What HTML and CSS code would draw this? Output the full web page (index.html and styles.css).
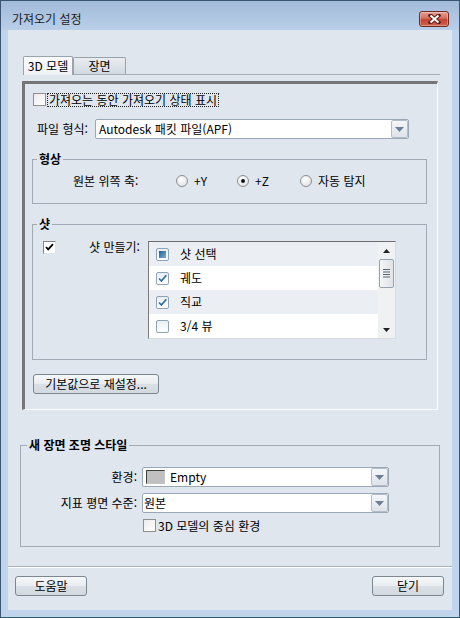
FILE: index.html
```html
<!DOCTYPE html>
<html lang="ko">
<head>
<meta charset="utf-8">
<title>가져오기 설정</title>
<link rel="stylesheet" href="styles.css">
</head>
<body>
<div class="window">
  <div class="titlebar">
    <span class="title">가져오기 설정</span>
    <span class="close">
      <svg width="13" height="10" viewBox="0 0 13 10"><path d="M2.5 1.5 L10.5 8.5 M10.5 1.5 L2.5 8.5" stroke="#5b2019" stroke-width="4" stroke-linecap="square"/><path d="M2.5 1.5 L10.5 8.5 M10.5 1.5 L2.5 8.5" stroke="#fff" stroke-width="2"/></svg>
    </span>
  </div>
  <div class="client">
    <div class="tabs">
      <div class="tab active">3D 모델</div>
      <div class="tab">장면</div>
    </div>
    <div class="panel">
      <div class="row-check">
        <span class="cb"></span>
        <span class="focus">가져오는 동안 가져오기 상태 표시</span>
      </div>
      <div class="row-file">
        <span class="lbl-file">파일 형식:</span>
        <div class="select file-select">
          <span class="val">Autodesk 패킷 파일(APF)</span>
          <span class="dd"><svg width="9" height="5" viewBox="0 0 9 5"><path d="M0 0 H9 L4.5 5 Z" fill="#6c7f97"/></svg></span>
        </div>
      </div>
      <fieldset class="group">
        <legend>형상</legend>
        <div class="radio-row">
          <span class="lbl-axis">원본 위쪽 축:</span>
          <span class="radio-item w61"><span class="radio"></span>+Y</span>
          <span class="radio-item w63"><span class="radio on"></span>+Z</span>
          <span class="radio-item"><span class="radio"></span>자동 탐지</span>
        </div>
      </fieldset>
      <fieldset class="group">
        <legend>샷</legend>
        <div class="shot-row">
          <span class="cb-classic"><svg width="11" height="11" viewBox="0 0 11 11"><path d="M2 5 L4.2 7.4 L9 2.2" fill="none" stroke="#000" stroke-width="1.8"/></svg></span>
          <span class="lbl-shot">샷 만들기:</span>
          <div class="list">
            <div class="list-rows">
              <div class="list-row alt"><span class="lcb mixed"><span class="fill"></span></span>샷 선택</div>
              <div class="list-row"><span class="lcb"><svg width="11" height="11" viewBox="0 0 11 11"><path d="M2 5.5 L4.4 8 L9.3 2.2" fill="none" stroke="#2f6c9e" stroke-width="1.7"/></svg></span>궤도</div>
              <div class="list-row alt"><span class="lcb"><svg width="11" height="11" viewBox="0 0 11 11"><path d="M2 5.5 L4.4 8 L9.3 2.2" fill="none" stroke="#2f6c9e" stroke-width="1.7"/></svg></span>직교</div>
              <div class="list-row"><span class="lcb"></span>3/4 뷰</div>
            </div>
            <div class="sb">
              <span class="sb-btn"><svg width="7" height="4" viewBox="0 0 7 4"><path d="M0 4 H7 L3.5 0 Z" fill="#222"/></svg></span>
              <span class="thumb"><svg width="7" height="9" viewBox="0 0 7 9"><path d="M0 0.5 H7 M0 3 H7 M0 5.5 H7 M0 8 H7" stroke="#5a6570" stroke-width="1"/></svg></span>
              <span class="sb-fill"></span>
              <span class="sb-btn"><svg width="7" height="4" viewBox="0 0 7 4"><path d="M0 0 H7 L3.5 4 Z" fill="#222"/></svg></span>
            </div>
          </div>
        </div>
      </fieldset>
      <button class="btn btn-reset">기본값으로 재설정...</button>
    </div>
    <fieldset class="group group-light">
      <legend>새 장면 조명 스타일</legend>
      <div class="light-grid">
        <span class="lbl-r">환경:</span>
        <div class="select">
          <span class="val"><span class="swatch"></span>Empty</span>
          <span class="dd"><svg width="9" height="5" viewBox="0 0 9 5"><path d="M0 0 H9 L4.5 5 Z" fill="#6c7f97"/></svg></span>
        </div>
        <span class="lbl-r">지표 평면 수준:</span>
        <div class="select">
          <span class="val tight">원본</span>
          <span class="dd"><svg width="9" height="5" viewBox="0 0 9 5"><path d="M0 0 H9 L4.5 5 Z" fill="#6c7f97"/></svg></span>
        </div>
        <span></span>
        <div class="row-check2"><span class="cb"></span><span>3D 모델의 중심 환경</span></div>
      </div>
    </fieldset>
    <div class="sep"></div>
    <div class="footer">
      <button class="btn btn-foot">도움말</button>
      <button class="btn btn-foot">닫기</button>
    </div>
  </div>
</div>
</body>
</html>
```
FILE: styles.css
```css
* { box-sizing: border-box; }
html, body { margin: 0; padding: 0; }
body {
  width: 460px; height: 618px; overflow: hidden;
  font-family: "Noto Sans CJK KR", "Liberation Sans", sans-serif;
  font-size: 12px; line-height: 14px; color: #000; background: #fff;
}
.window {
  width: 460px; height: 618px;
  border: 1px solid #3a5571; border-bottom-color: #2c5e6c;
  background: #c0d5ec;
  display: flex; flex-direction: column;
}
.titlebar {
  flex: none; height: 29px; padding: 7px 10px 0 11px;
  display: flex; align-items: center;
  background: linear-gradient(#a2bbd9, #b9cfe8);
}
.title { color: #1c1c1c; }
.close {
  margin-left: auto; width: 30px; height: 16px;
  border: 1px solid #6f2c25; border-radius: 3px;
  background: linear-gradient(#e6a193, #d66c5d 45%, #c3422f 55%, #d06450);
  box-shadow: inset 0 0 0 1px rgba(255,255,255,.3);
  display: flex; align-items: center; justify-content: center;
}
.client {
  flex: 1; margin: 0 7px 7px; background: #dfe6ee;
  display: flex; flex-direction: column;
}
.tabs {
  margin: 26px 12px 0 15px; height: 19px;
  display: flex; align-items: flex-end;
  border-bottom: 1px solid #a5aeb8;
}
.tab {
  text-align: center; border: 1px solid #98a3ae; border-bottom: 0;
  border-radius: 2px 2px 0 0;
}
.tab.active {
  width: 50px; height: 19px; margin-bottom: -1px; line-height: 17px;
  background: linear-gradient(#fbfcfd, #eef1f4);
}
.tab:not(.active) {
  width: 53px; height: 17px; line-height: 15px;
  background: linear-gradient(#e9edf1, #d2d9e1);
}
.panel {
  margin: 6px 14px 0; height: 329px;
  border-style: solid; border-width: 3px 1px 1px 3px;
  border-color: #767676 #fff #fff #767676;
  padding: 9px 10px 0 7px;
}
.row-check { display: flex; align-items: center; height: 13px; margin-left: 1px; }
.cb {
  flex: none; width: 13px; height: 13px;
  border: 1px solid #8e8f8f;
  background: linear-gradient(135deg, #ececec, #fff);
}
.focus { margin-left: 2px; padding: 0 1px; outline: 1px dotted #222; line-height: 12px; }
.row-file { display: flex; align-items: center; margin-top: 13px; padding-left: 5px; }
.lbl-file { width: 58px; }
.select {
  display: flex; height: 20px; border: 1px solid #9ba7b4; border-radius: 2px; background: #fff;
}
.file-select { width: 314px; }
.select .val { flex: 1; padding-left: 3px; line-height: 18px; display: flex; align-items: center; }
.select .val.tight { padding-left: 1px; }
.dd {
  width: 17px; border: 1px solid #b3bdc8; border-radius: 2px;
  background: linear-gradient(#f5f7f9, #dde3e9);
  display: flex; align-items: center; justify-content: center;
}
fieldset.group {
  margin: 13px 0 0; padding: 0; min-inline-size: 0;
  border: 1px solid #a2abb5;
}
.group legend { padding: 0 2px; margin-left: 4px; font-weight: bold; line-height: 14px; }
.radio-row { display: flex; align-items: center; padding: 8px 0 15px 40px; }
.lbl-axis { width: 103px; }
.radio-item { display: flex; align-items: center; gap: 6px; }
.w61 { width: 61px; }
.w63 { width: 63px; }
.radio {
  flex: none; width: 12px; height: 12px; border-radius: 50%;
  border: 1px solid #8c8f93;
  background: radial-gradient(circle at 40% 35%, #fff, #e4e6e8 70%, #cfd2d5);
  display: flex; align-items: center; justify-content: center;
}
.radio.on::after { content: ""; width: 4px; height: 4px; border-radius: 50%; background: #111; }
.shot-row { display: flex; align-items: flex-start; padding: 10px 0 20px 10px; }
.cb-classic {
  flex: none; width: 13px; height: 13px; margin-right: 33px;
  border: 1px solid; border-color: #848484 #e3e3e3 #e3e3e3 #848484;
  background: #fff; display: flex; align-items: center; justify-content: center;
}
.lbl-shot { width: 59px; line-height: 12px; }
.list {
  width: 248px; height: 98px; display: flex;
  border: 1px solid; border-color: #6d6d6d #dadada #dadada #7b7b7b;
  box-shadow: inset 0 1px 0 #a8a8a8;
  background: #fff;
}
.list-rows { flex: 1; }
.list-row { height: 24px; display: flex; align-items: center; padding-left: 7px; gap: 11px; }
.list-row.alt { background: #ebeff3; }
.lcb {
  flex: none; width: 13px; height: 13px; border: 1px solid #8ea2b8; border-radius: 2px;
  background: linear-gradient(#e9eef3, #fff);
  display: flex; align-items: center; justify-content: center;
}
.lcb .fill { width: 7px; height: 7px; background: linear-gradient(135deg, #1f5c8e, #7ab2dc); }
.sb { width: 17px; background: #eff1f3; display: flex; flex-direction: column; align-items: center; }
.sb-btn { height: 17px; width: 100%; display: flex; align-items: center; justify-content: center; }
.thumb {
  width: 15px; height: 29px; border: 1px solid #98a2ac; border-radius: 2px;
  background: linear-gradient(90deg, #f4f5f6, #dfe3e7);
  display: flex; align-items: center; justify-content: center;
}
.sb-fill { flex: 1; }
.btn {
  font-family: inherit; font-size: 12px; line-height: 14px; color: #000;
  padding: 0; height: 20px;
  border: 1px solid #7d8790; border-radius: 3px;
  background: linear-gradient(#f6f8fa, #e9edf0 48%, #dae0e6 52%, #d1d8de);
}
.btn-reset { display: block; width: 126px; margin: 14px 0 0 1px; }
.btn-foot { width: 72px; }
.group-light { margin: 28px 12px 0 !important; }
.group-light legend { margin-left: 6px; }
.light-grid {
  display: grid; grid-template-columns: 116px 247px; grid-template-rows: 20px 20px 13px;
  column-gap: 5px; row-gap: 6px; padding: 15px 0 14px;
}
.lbl-r { justify-self: end; line-height: 20px; }
.swatch {
  flex: none; width: 19px; height: 14px; margin-right: 5px;
  border: 1px solid; border-color: #404040 #c4c4c4 #c4c4c4 #404040; background: #c0c0c0;
}
.row-check2 { display: flex; align-items: center; gap: 2px; margin-left: 1px; }
.sep { margin-top: 19px; height: 2px; border-top: 1px solid #a9b3bd; border-bottom: 1px solid #fff; }
.footer { display: flex; justify-content: space-between; margin: 8px 8px 0 7px; }
```
